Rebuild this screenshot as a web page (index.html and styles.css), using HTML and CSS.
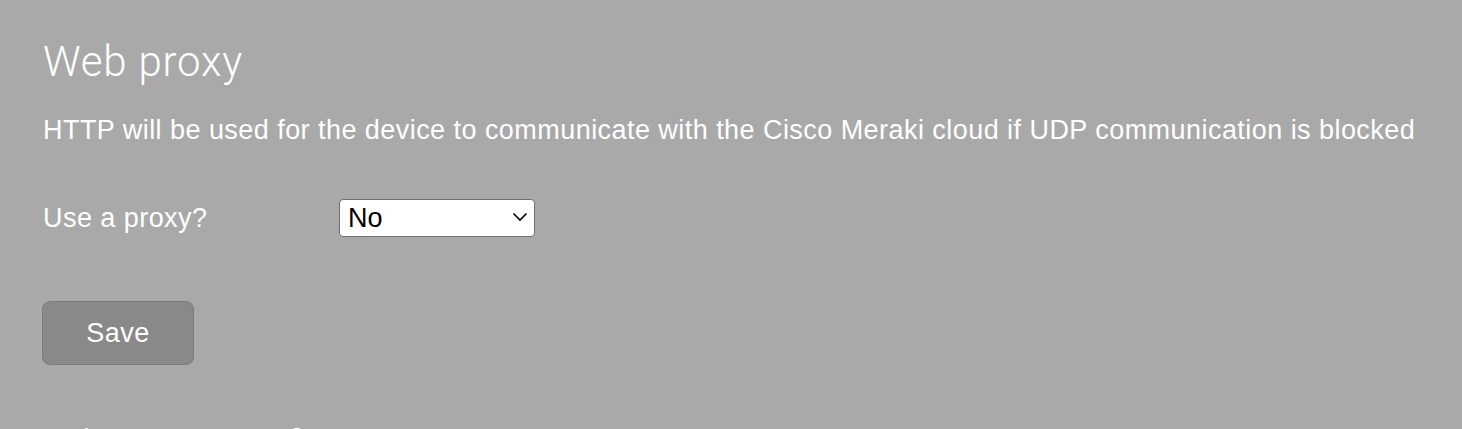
FILE: index.html
```html
<!DOCTYPE html>
<html lang="en">
<head>
    <meta charset="UTF-8">
    <meta name="viewport" content="width=device-width, initial-scale=1.0">
    <title>Web proxy</title>
    <link rel="stylesheet" href="styles.css">
</head>
<body>

    <div class="container">
        <section class="section">
            <h2>Web proxy</h2>
            <p class="note">HTTP will be used for the device to communicate with the Cisco Meraki cloud if UDP communication is blocked</p>

            <form id="proxyForm">
                <div class="row">
                    <label for="useProxy">Use a proxy?</label>
                    <div class="select-wrap">
                        <select id="useProxy" name="useProxy">
                            <option value="no">No</option>
                            <option value="yes">Yes</option>
                        </select>
                        <svg class="chevron" width="16" height="10" viewBox="0 0 16 10">
                            <path d="M1.5 1.5 L8 8 L14.5 1.5" fill="none" stroke="#000" stroke-width="1.6"/>
                        </svg>
                    </div>
                </div>

                <button type="submit">Save</button>
            </form>
        </section>

        <section class="section">
            <h2>Ethernet configuration</h2>
        </section>
    </div>

</body>
</html>
```

FILE: styles.css
```css
body {
    font-family: "Liberation Sans", Arial, sans-serif;
    margin: 0;
    padding: 0;
    background-color: #a9a9a9;
    color: #fff;
    height: 429px;
    overflow: hidden;
}
.container {
    padding: 38px 43px 0;
}
h2 {
    font-family: Roboto, "Liberation Sans", sans-serif;
    font-weight: 300;
    font-size: 42px;
    line-height: 48px;
    letter-spacing: 0.8px;
    margin: 0 0 28px;
}
.note {
    font-size: 27px;
    line-height: 32px;
    letter-spacing: 0.45px;
    margin: 0 0 53px;
}
form {
    display: flex;
    flex-direction: column;
    align-items: flex-start;
    gap: 64px;
}
.row {
    display: grid;
    grid-template-columns: 296px 196px;
    align-items: center;
}
label {
    font-size: 27px;
    line-height: 32px;
    letter-spacing: 0.45px;
}
.select-wrap {
    position: relative;
    height: 38px;
}
select {
    appearance: none;
    display: block;
    width: 196px;
    height: 38px;
    padding: 0 8px;
    border: 1px solid #707070;
    border-radius: 4px;
    background: #fff;
    color: #000;
    font-family: "Liberation Sans", Arial, sans-serif;
    font-size: 27px;
}
.chevron {
    position: absolute;
    right: 7px;
    top: 13px;
    pointer-events: none;
}
button {
    width: 152px;
    height: 64px;
    margin-left: -1px;
    background-color: #898989;
    border: 1px solid #7b7b7b;
    border-radius: 8px;
    color: #fff;
    font-family: "Liberation Sans", Arial, sans-serif;
    font-size: 27px;
    letter-spacing: 0.45px;
    cursor: pointer;
}
.section + .section {
    margin-top: 57px;
}
```
